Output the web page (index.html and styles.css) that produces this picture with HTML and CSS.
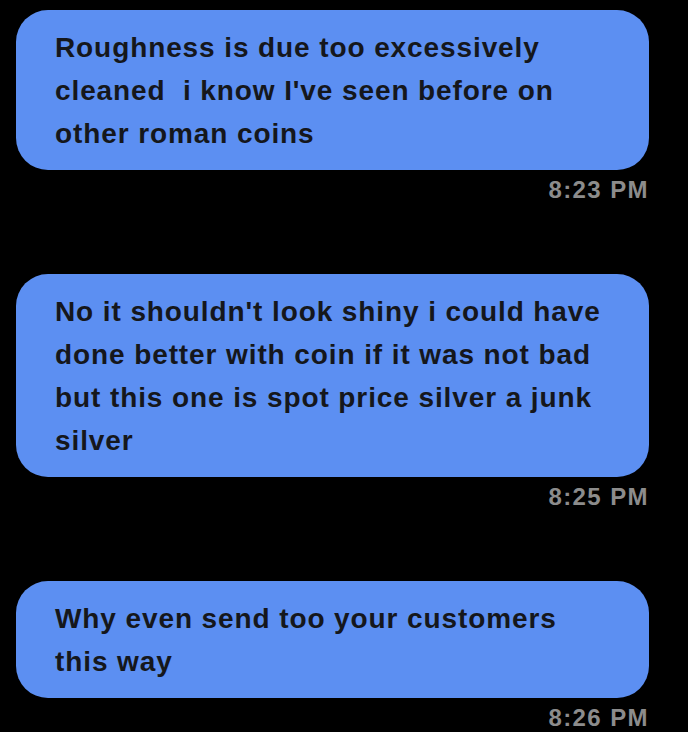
FILE: index.html
```html
<!DOCTYPE html>
<html lang="en">
<head>
    <meta charset="UTF-8">
    <meta name="viewport" content="width=device-width, initial-scale=1.0">
    <title>Messages</title>
    <link rel="stylesheet" href="styles.css">
</head>
<body>
    <div class="thread">
        <div class="message">
            <div class="bubble">Roughness is due too excessively cleaned&nbsp; i know I've seen before on other roman coins</div>
            <div class="time">8:23 PM</div>
        </div>
        <div class="message">
            <div class="bubble">No it shouldn't look shiny i could have done better with coin if it was not bad but this one is spot price silver a junk silver</div>
            <div class="time">8:25 PM</div>
        </div>
        <div class="message">
            <div class="bubble">Why even send too your customers this way</div>
            <div class="time">8:26 PM</div>
        </div>
    </div>
</body>
</html>
```

FILE: styles.css
```css
body {
    margin: 0;
    padding: 0;
    background-color: #000000;
    font-family: 'Liberation Sans', Arial, sans-serif;
}
.thread {
    display: flex;
    flex-direction: column;
    gap: 58px;
    padding: 10px 39px 0 16px;
}
.message {
    display: flex;
    flex-direction: column;
}
.bubble {
    background-color: #5c8ff2;
    color: #15171c;
    font-size: 28px;
    font-weight: 700;
    letter-spacing: 0.9px;
    line-height: 43px;
    padding: 16px 32px 15px 39px;
    border-radius: 32px;
}
.time {
    align-self: flex-end;
    color: #8c8c8c;
    font-size: 24px;
    font-weight: 700;
    letter-spacing: 1.4px;
    line-height: 28px;
    margin-top: 6px;
    margin-bottom: 12px;
}
```
